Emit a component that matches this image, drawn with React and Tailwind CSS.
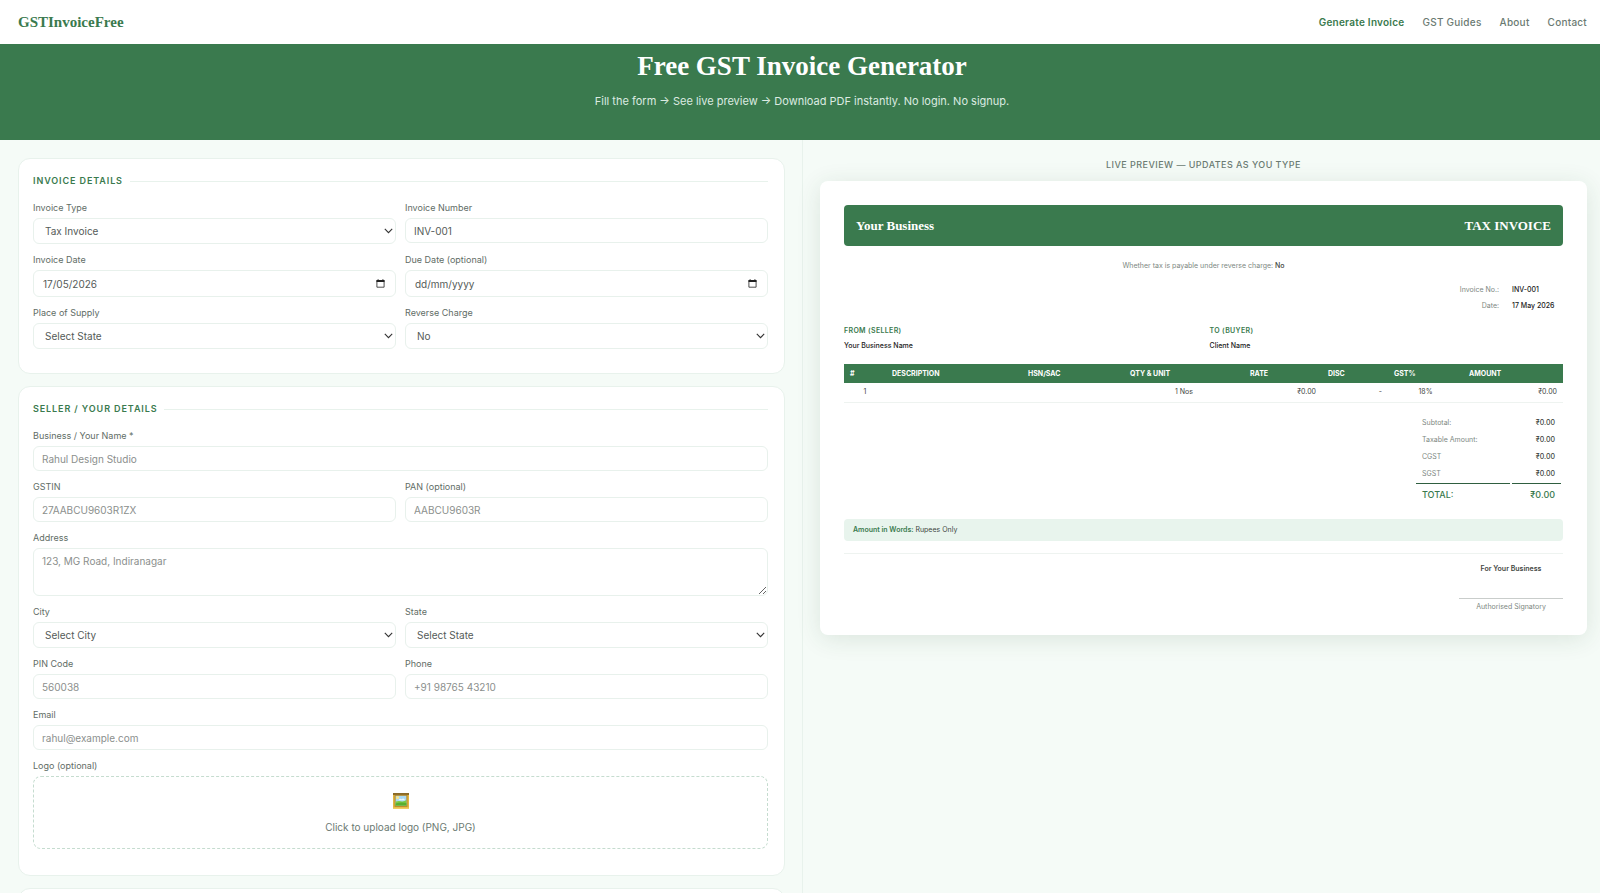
import React from 'react';
import clsx from 'clsx';

const SANS = "font-['Inter','Noto_Sans',sans-serif]";
const SERIF = "font-['Liberation_Serif',serif]";

const control = 'block w-full rounded-md border border-[#e8f1ec] bg-white text-[10px] leading-4 text-[#555b58] outline-none focus:border-[#3a7a4e]';

const navLinks = [
    { label: 'Generate Invoice', active: true },
    { label: 'GST Guides' },
    { label: 'About' },
    { label: 'Contact' },
];

const columns = [
    { label: '#', width: 'w-[42px]' },
    { label: 'DESCRIPTION', width: 'w-[136px]' },
    { label: 'HSN/SAC', width: 'w-[102px]' },
    { label: 'QTY & UNIT', width: 'w-[120px]' },
    { label: 'RATE', width: 'w-[78px]' },
    { label: 'DISC', width: 'w-[66px]' },
    { label: 'GST%', width: 'w-[75px]' },
    { label: 'AMOUNT', width: 'w-[100px]' },
];

const Card = ({ title, children }) => (
    <section className="shrink-0 rounded-xl border border-[#e8f2ec] bg-white pt-[14px] pr-4 pb-6 pl-[14px]">
        <div className="mb-[11px] flex items-center gap-[7px]">
            <h2 className="text-[9px] leading-4 font-semibold tracking-widest text-[#3a7a4e] uppercase">{title}</h2>
            <span className="h-px flex-1 bg-[#e8f2ec]" />
        </div>
        <div className="grid grid-cols-2 gap-x-[9px] gap-y-2">{children}</div>
    </section>
);

const Field = ({ id, label, wide, children }) => (
    <div className={clsx('min-w-0', wide && 'col-span-2')}>
        <label htmlFor={id} className="mb-0.5 block text-[9px] leading-4 text-[#5f6d66]">{label}</label>
        {children}
    </div>
);

const TextField = ({ id, label, wide, ...props }) => (
    <Field id={id} label={label} wide={wide}>
        <input id={id} className={clsx(control, 'h-[25px] px-2 placeholder:text-[#8b8f8d]')} {...props} />
    </Field>
);

const SelectField = ({ id, label, options, ...props }) => (
    <Field id={id} label={label}>
        <div className="relative">
            <select id={id} className={clsx(control, 'h-[26px] appearance-none pr-6 pl-[11px]')} {...props}>
                {options.map((option) => <option key={option}>{option}</option>)}
            </select>
            <svg className="pointer-events-none absolute top-[10px] right-[3px] h-[6px] w-[9px]" viewBox="0 0 9 6" fill="none" stroke="#333" strokeWidth="1.1">
                <path d="M0.8 0.9 4.5 4.6 8.2 0.9" />
            </svg>
        </div>
    </Field>
);

const DateField = ({ id, label, ...props }) => (
    <Field id={id} label={label}>
        <div className="relative">
            <input id={id} className={clsx(control, 'h-[27px] px-[9px] placeholder:text-[#555b58]')} placeholder="dd/mm/yyyy" {...props} />
            <button type="button" aria-label="Open calendar" className="absolute top-[9px] right-[11px]">
                <svg className="h-[9px] w-[9px]" viewBox="0 0 9 9" fill="none">
                    <path d="M0.9 1.5h7.2v6.7H0.9z" stroke="#222" strokeWidth="0.8" />
                    <path d="M0.5 1h8v2.1h-8zM1.6 0.2h1v1h-1zM6.4 0.2h1v1h-1z" fill="#222" />
                </svg>
            </button>
        </div>
    </Field>
);

const PictureIcon = () => (
    <svg className="h-4 w-4" viewBox="0 0 16 16">
        <path d="M0 0h16v16H0z" fill="#e0b640" />
        <path d="M0 0h16v2H0z" fill="#8a6a28" />
        <path d="M1.6 1.8h12.8v12H1.6z" fill="#b58526" />
        <path d="M2.6 2.8h10.8v9.8H2.6z" fill="#a9d9f3" />
        <circle cx="4.6" cy="4.6" r="1.6" fill="#f8e58a" />
        <path d="M5.5 7.2q1.4-2.2 3.2-1 2-1.6 3.4 1z" fill="#eef8fc" />
        <path d="M2.6 8.6q3-1.2 5.4-.4t5.4-1.2v5.6H2.6z" fill="#7ccb45" />
        <path d="M2.6 10.6q5-1.8 10.8-.6v2.6H2.6z" fill="#58b02f" />
        <path d="M0 14.6h16V16H0z" fill="#f0cd62" />
    </svg>
);

const InvoicePreview = ({ number, business, reverseCharge }) => (
    <article className="rounded-lg bg-white px-6 pt-6 pb-5 text-[7px] leading-4 text-[#3f4642] shadow-[0_4px_24px_rgba(30,70,45,0.12)]">
        <header className={clsx(SERIF, 'flex h-[41px] items-center justify-between rounded bg-[#3a7a4e] px-3 text-[13px] font-bold text-white')}>
            <span>{business || 'Your Business'}</span>
            <span>TAX INVOICE</span>
        </header>

        <p className="mt-3 text-center text-[#7d8882]">
            Whether tax is payable under reverse charge: <span className="font-medium text-[#3f4642]">{reverseCharge}</span>
        </p>

        <dl className="mt-2 ml-auto grid w-[104px] grid-cols-[40px_1fr] gap-x-[13px]">
            <dt className="text-right whitespace-nowrap text-[#7d8882]">Invoice No.:</dt>
            <dd className="font-medium whitespace-nowrap text-[#222]">{number}</dd>
            <dt className="text-right text-[#7d8882]">Date:</dt>
            <dd className="font-medium whitespace-nowrap text-[#222]">17 May 2026</dd>
        </dl>

        <div className="mt-2.5 grid grid-cols-2 gap-3">
            <div>
                <h3 className="leading-[14px] font-semibold tracking-wider text-[#3a7a4e]">FROM (SELLER)</h3>
                <p className="font-medium text-[#222]">{business || 'Your Business Name'}</p>
            </div>
            <div>
                <h3 className="leading-[14px] font-semibold tracking-wider text-[#3a7a4e]">TO (BUYER)</h3>
                <p className="font-medium text-[#222]">Client Name</p>
            </div>
        </div>

        <table className="mt-2.5 w-full table-fixed border-collapse">
            <thead>
                <tr className="h-[19px] bg-[#3a7a4e] text-left text-white">
                    {columns.map((col) => (
                        <th key={col.label} className={clsx(col.width, 'px-1.5 font-bold')}>{col.label}</th>
                    ))}
                </tr>
            </thead>
            <tbody>
                <tr className="h-[19px] border-b border-[#eef3f0]">
                    <td className="px-1.5 text-center">1</td>
                    <td />
                    <td />
                    <td className="px-1.5 text-center">1 Nos</td>
                    <td className="px-1.5 text-right">₹0.00</td>
                    <td className="px-1.5 text-right">-</td>
                    <td className="px-1.5 text-center">18%</td>
                    <td className="px-1.5 text-right">₹0.00</td>
                </tr>
            </tbody>
        </table>

        <table className="mt-3 ml-auto w-[149px] border-separate border-spacing-x-0.5 border-spacing-y-0">
            <tbody>
                {['Subtotal:', 'Taxable Amount:', 'CGST', 'SGST'].map((label) => (
                    <tr key={label} className="h-[17px]">
                        <td className="px-1.5 whitespace-nowrap text-[#7d8882]">{label}</td>
                        <td className="px-1.5 text-right font-medium">₹0.00</td>
                    </tr>
                ))}
                <tr className="h-6 text-[9px] font-medium text-[#3a7a4e]">
                    <td className="w-[94px] border-t border-[#2f5f40] px-1.5">TOTAL:</td>
                    <td className="border-t border-[#2f5f40] px-1.5 text-right">₹0.00</td>
                </tr>
            </tbody>
        </table>

        <p className="mt-3 rounded bg-[#e8f4ed] px-[9px] py-[3px]">
            <span className="font-semibold text-[#3a7a4e]">Amount in Words:</span> Rupees Only
        </p>

        <footer className="mt-3 border-t border-[#eef3f0] pt-[7px]">
            <div className="ml-auto w-[104px] text-center">
                <p className="font-semibold">For {business || 'Your Business'}</p>
                <p className="mt-[21px] border-t border-[#c9cdcb] text-[#7d8882]">Authorised Signatory</p>
            </div>
        </footer>
    </article>
);

const App = () => {
    const [number, setNumber] = React.useState('INV-001');
    const [date, setDate] = React.useState('17/05/2026');
    const [business, setBusiness] = React.useState('');
    const [reverseCharge, setReverseCharge] = React.useState('No');

    return (
        <div className={clsx(SANS, 'flex h-screen flex-col overflow-hidden bg-[#f5fbf7]')}>
            <header className="flex h-11 shrink-0 items-center justify-between bg-white pr-[13px] pl-[18px]">
                <a href="#" className={clsx(SERIF, 'text-[15px] font-bold text-[#3a7a4e]')}>GSTInvoiceFree</a>
                <nav className="flex gap-[18px] text-[10px] leading-4 tracking-wide">
                    {navLinks.map((link) => (
                        <a key={link.label} href="#" className={link.active ? 'font-semibold text-[#3a7a4e]' : 'font-medium text-[#6b7a72]'}>
                            {link.label}
                        </a>
                    ))}
                </nav>
            </header>

            <div className="h-24 shrink-0 bg-[#3a7a4e] pt-1 pl-1 text-center text-white">
                <h1 className={clsx(SERIF, 'text-[27px] leading-9 font-bold')}>Free GST Invoice Generator</h1>
                <p className="mt-[7px] text-[11px] leading-5 text-[#dcebe1]">
                    Fill the form → See live preview → Download PDF instantly. No login. No signup.
                </p>
            </div>

            <main className="grid min-h-0 flex-1 grid-cols-[803fr_797fr]">
                <form className="flex min-h-0 flex-col gap-3 overflow-hidden border-r border-[#e8f2ec] pt-[18px] pr-[17px] pl-[18px]">
                    <Card title="Invoice Details">
                        <SelectField id="type" label="Invoice Type" options={['Tax Invoice']} />
                        <TextField id="number" label="Invoice Number" value={number} onChange={(e) => setNumber(e.target.value)} />
                        <DateField id="date" label="Invoice Date" value={date} onChange={(e) => setDate(e.target.value)} />
                        <DateField id="due" label="Due Date (optional)" />
                        <SelectField id="supply" label="Place of Supply" options={['Select State']} />
                        <SelectField id="reverse" label="Reverse Charge" options={['No', 'Yes']} value={reverseCharge} onChange={(e) => setReverseCharge(e.target.value)} />
                    </Card>

                    <Card title="Seller / Your Details">
                        <TextField id="business" label="Business / Your Name *" wide placeholder="Rahul Design Studio" value={business} onChange={(e) => setBusiness(e.target.value)} />
                        <TextField id="gstin" label="GSTIN" placeholder="27AABCU9603R1ZX" />
                        <TextField id="pan" label="PAN (optional)" placeholder="AABCU9603R" />
                        <Field id="address" label="Address" wide>
                            <textarea id="address" className={clsx(control, 'h-12 resize-y px-2 py-1 placeholder:text-[#8b8f8d]')} placeholder="123, MG Road, Indiranagar" />
                        </Field>
                        <SelectField id="city" label="City" options={['Select City']} />
                        <SelectField id="state" label="State" options={['Select State']} />
                        <TextField id="pin" label="PIN Code" placeholder="560038" />
                        <TextField id="phone" label="Phone" type="tel" placeholder="+91 98765 43210" />
                        <TextField id="email" label="Email" wide type="email" placeholder="rahul@example.com" />
                        <Field id="logo" label="Logo (optional)" wide>
                            <label className="relative mb-0.5 flex h-[73px] cursor-pointer flex-col items-center rounded-lg border border-dashed border-[#c5dccf] pt-4 text-[10px] leading-4 text-[#6b7a72]">
                                <input id="logo" type="file" accept="image/png,image/jpeg" className="sr-only" />
                                <PictureIcon />
                                <span className="mt-2.5">Click to upload logo (PNG, JPG)</span>
                            </label>
                        </Field>
                    </Card>

                    <section className="h-16 shrink-0 rounded-xl border border-[#e8f2ec] bg-white" />
                </form>

                <aside className="pt-[17px] pr-[13px] pl-[17px]">
                    <p className="mb-2 text-center text-[9px] leading-4 font-medium tracking-wider text-[#6b7a72]">LIVE PREVIEW — UPDATES AS YOU TYPE</p>
                    <InvoicePreview number={number} business={business} reverseCharge={reverseCharge} />
                </aside>
            </main>
        </div>
    );
};

export default App;
